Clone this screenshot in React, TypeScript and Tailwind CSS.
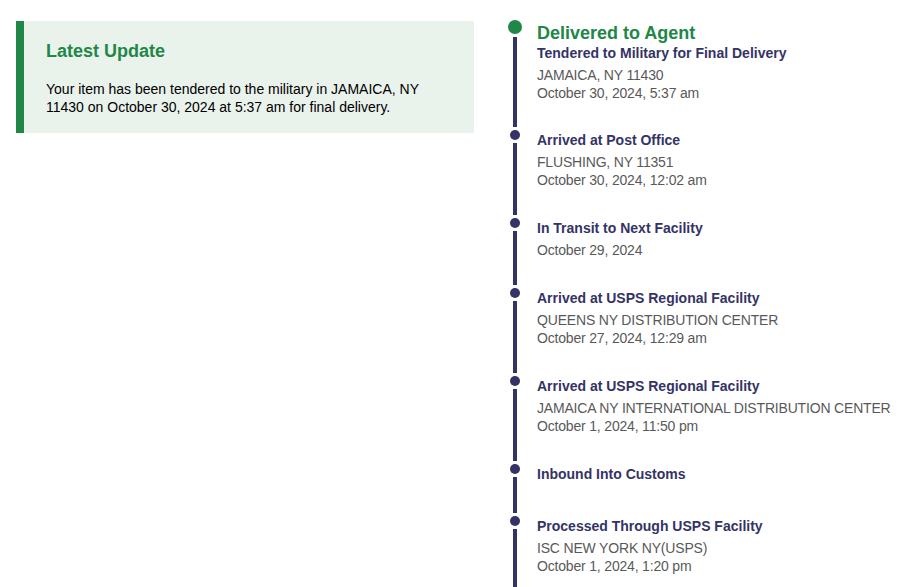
import React from 'react';

interface TrackingEvent {
  title: string;
  lines: string[];
}

const events: TrackingEvent[] = [
  { title: 'Tendered to Military for Final Delivery', lines: ['JAMAICA, NY 11430', 'October 30, 2024, 5:37 am'] },
  { title: 'Arrived at Post Office', lines: ['FLUSHING, NY 11351', 'October 30, 2024, 12:02 am'] },
  { title: 'In Transit to Next Facility', lines: ['October 29, 2024'] },
  { title: 'Arrived at USPS Regional Facility', lines: ['QUEENS NY DISTRIBUTION CENTER', 'October 27, 2024, 12:29 am'] },
  { title: 'Arrived at USPS Regional Facility', lines: ['JAMAICA NY INTERNATIONAL DISTRIBUTION CENTER', 'October 1, 2024, 11:50 pm'] },
  { title: 'Inbound Into Customs', lines: [] },
  { title: 'Processed Through USPS Facility', lines: ['ISC NEW YORK NY(USPS)', 'October 1, 2024, 1:20 pm'] },
];

const TimelineItem: React.FC<{ event: TrackingEvent; first?: boolean }> = ({ event, first }) => (
  <div className="flex">
    <div className="w-[30px] shrink-0 flex flex-col items-center">
      {first ? (
        <div className="w-[14px] h-[14px] rounded-full bg-[#218748] shrink-0" />
      ) : (
        <div className="w-[10px] h-[10px] rounded-full bg-[#333366] shrink-0" />
      )}
      <div className="w-[4px] flex-1 bg-[#333366] mt-[3px] mb-[3px]" />
    </div>
    <div className={first ? 'ml-[7px] pb-[28px]' : 'ml-[7px] pb-[29px]'}>
      {first && (
        <div className="pt-[2px] text-[18px] leading-[22px] font-bold text-[#218748]">Delivered to Agent</div>
      )}
      <div className={first ? '-mt-[1px] text-[14px] leading-[20px] font-bold text-[#333366]' : 'text-[14px] leading-[20px] font-bold text-[#333366]'}>
        {event.title}
      </div>
      <div className="mt-[3px] text-[14px] leading-[18px] tracking-[-0.18px] text-[#595959]">
        {event.lines.map((line, i) => (
          <div key={i}>{line}</div>
        ))}
      </div>
    </div>
  </div>
);

export default function App() {
  return (
    <div className="h-[587px] overflow-hidden bg-white font-['Liberation_Sans',Arial,sans-serif]">
      <div className="flex items-start pl-[16px] pt-[20px]">
        <div className="mt-[1px] w-[458px] shrink-0 border-l-[8px] border-[#218748] bg-[#eaf2ec] pl-[22px] pr-[22px] pt-[19px] pb-[17px]">
          <h2 className="text-[18px] leading-[22px] font-bold text-[#218748]">Latest Update</h2>
          <p className="mt-[18px] text-[14px] leading-[18px] text-black">
            Your item has been tendered to the military in JAMAICA, NY 11430 on October 30, 2024 at 5:37 am for final delivery.
          </p>
        </div>
        <div className="ml-[26px] flex flex-col">
          {events.map((event, i) => (
            <TimelineItem key={i} event={event} first={i === 0} />
          ))}
        </div>
      </div>
    </div>
  );
}
